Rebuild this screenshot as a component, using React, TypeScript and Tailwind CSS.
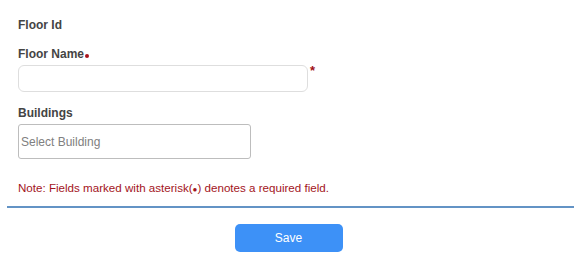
export default function App() {
  return (
    <div className="w-[577px] h-[275px] bg-white font-['Liberation_Sans',Arial,sans-serif]">
      <div className="px-[18px] pt-[16px]">
        <label className="block text-[12px] font-bold text-[#444]">Floor Id</label>

        <div className="mt-[11px]">
          <label className="block text-[12px] font-bold text-[#444]">
            Floor Name
            <span className="ml-[1px] inline-block h-[4px] w-[4px] rounded-full bg-[#a8141c]" />
          </label>
          <div className="mt-[2px] flex items-start">
            <input
              type="text"
              className="h-[27px] w-[290px] rounded-[6px] border border-[#dedede] px-2 text-[12px] outline-none"
            />
            <span className="ml-[2px] -mt-[4px] text-[13px] font-bold text-[#a00f14]">*</span>
          </div>
        </div>

        <div className="mt-[12px]">
          <label className="block text-[12px] font-bold text-[#444]">Buildings</label>
          <div className="mt-[2px] flex h-[35px] w-[233px] items-center rounded-[3px] border border-[#bdbdbd] px-[2px] text-[12px] text-[#808080]">
            Select Building
          </div>
        </div>

        <p className="mt-[20px] text-[11.6px] text-[#a3141c]">
          Note: Fields marked with asterisk(<span className="text-[8px]">●</span>) denotes a required field.
        </p>
      </div>

      <div className="ml-[7px] mr-[3px] mt-[10px] h-[2px] bg-[#6393c5]" />

      <div className="mt-[16px] flex justify-center">
        <button className="h-[28px] w-[108px] rounded-[5px] bg-[#3d91f7] text-[12px] text-white">
          Save
        </button>
      </div>
    </div>
  );
}
